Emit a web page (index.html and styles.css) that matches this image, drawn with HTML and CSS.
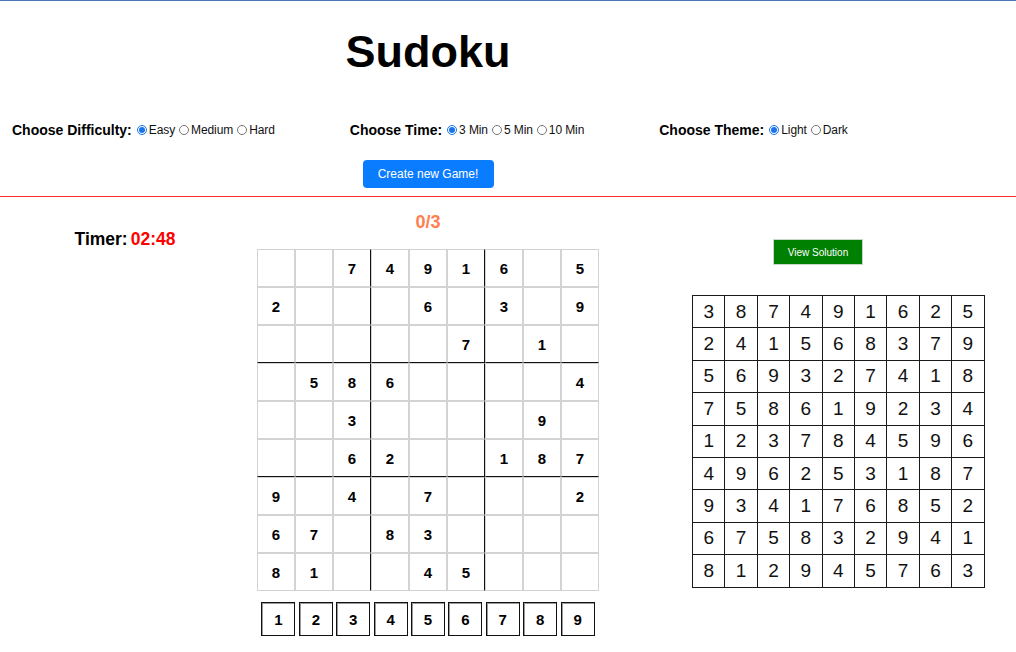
FILE: index.html
```html
<!DOCTYPE html>
<html lang="en">
<head>
<meta charset="utf-8">
<title>Sudoku</title>
<link rel="stylesheet" href="styles.css">
</head>
<body>
<div class="page">
  <header class="header">
    <div class="header-inner">
      <h1 class="title">Sudoku</h1>
    </div>
    <div class="controls">
      <div class="group">
        <span class="label">Choose Difficulty:</span>
        <label class="opt"><input type="radio" name="diff" checked>Easy</label>
        <label class="opt"><input type="radio" name="diff">Medium</label>
        <label class="opt"><input type="radio" name="diff">Hard</label>
      </div>
      <div class="group">
        <span class="label">Choose Time:</span>
        <label class="opt"><input type="radio" name="time" checked>3 Min</label>
        <label class="opt"><input type="radio" name="time">5 Min</label>
        <label class="opt"><input type="radio" name="time">10 Min</label>
      </div>
      <div class="group">
        <span class="label">Choose Theme:</span>
        <label class="opt"><input type="radio" name="theme" checked>Light</label>
        <label class="opt"><input type="radio" name="theme">Dark</label>
      </div>
    </div>
    <div class="header-inner actions">
      <button class="new-game" type="button">Create new Game!</button>
    </div>
  </header>

  <main class="main">
    <section class="left">
      <div class="timer"><span class="timer-label">Timer:</span><span class="timer-value">02:48</span></div>
    </section>

    <section class="center">
      <div class="score">0/3</div>
      <div class="board">
        <div class="cell"></div><div class="cell"></div><div class="cell br">7</div><div class="cell">4</div><div class="cell">9</div><div class="cell br">1</div><div class="cell">6</div><div class="cell"></div><div class="cell">5</div>
        <div class="cell">2</div><div class="cell"></div><div class="cell br"></div><div class="cell"></div><div class="cell">6</div><div class="cell br"></div><div class="cell">3</div><div class="cell"></div><div class="cell">9</div>
        <div class="cell bb"></div><div class="cell bb"></div><div class="cell bb br"></div><div class="cell bb"></div><div class="cell bb"></div><div class="cell bb br">7</div><div class="cell bb"></div><div class="cell bb">1</div><div class="cell bb"></div>
        <div class="cell"></div><div class="cell">5</div><div class="cell br">8</div><div class="cell">6</div><div class="cell"></div><div class="cell br"></div><div class="cell"></div><div class="cell"></div><div class="cell">4</div>
        <div class="cell"></div><div class="cell"></div><div class="cell br">3</div><div class="cell"></div><div class="cell"></div><div class="cell br"></div><div class="cell"></div><div class="cell">9</div><div class="cell"></div>
        <div class="cell bb"></div><div class="cell bb"></div><div class="cell bb br">6</div><div class="cell bb">2</div><div class="cell bb"></div><div class="cell bb br"></div><div class="cell bb">1</div><div class="cell bb">8</div><div class="cell bb">7</div>
        <div class="cell">9</div><div class="cell"></div><div class="cell br">4</div><div class="cell"></div><div class="cell">7</div><div class="cell br"></div><div class="cell"></div><div class="cell"></div><div class="cell">2</div>
        <div class="cell">6</div><div class="cell">7</div><div class="cell br"></div><div class="cell">8</div><div class="cell">3</div><div class="cell br"></div><div class="cell"></div><div class="cell"></div><div class="cell"></div>
        <div class="cell">8</div><div class="cell">1</div><div class="cell br"></div><div class="cell"></div><div class="cell">4</div><div class="cell br">5</div><div class="cell"></div><div class="cell"></div><div class="cell"></div>
      </div>
      <div class="pad">
        <button class="num" type="button">1</button>
        <button class="num" type="button">2</button>
        <button class="num" type="button">3</button>
        <button class="num" type="button">4</button>
        <button class="num" type="button">5</button>
        <button class="num" type="button">6</button>
        <button class="num" type="button">7</button>
        <button class="num" type="button">8</button>
        <button class="num" type="button">9</button>
      </div>
    </section>

    <section class="right">
      <button class="view" type="button">View Solution</button>
      <div class="solution">
        <div class="s">3</div><div class="s">8</div><div class="s">7</div><div class="s">4</div><div class="s">9</div><div class="s">1</div><div class="s">6</div><div class="s">2</div><div class="s">5</div>
        <div class="s">2</div><div class="s">4</div><div class="s">1</div><div class="s">5</div><div class="s">6</div><div class="s">8</div><div class="s">3</div><div class="s">7</div><div class="s">9</div>
        <div class="s">5</div><div class="s">6</div><div class="s">9</div><div class="s">3</div><div class="s">2</div><div class="s">7</div><div class="s">4</div><div class="s">1</div><div class="s">8</div>
        <div class="s">7</div><div class="s">5</div><div class="s">8</div><div class="s">6</div><div class="s">1</div><div class="s">9</div><div class="s">2</div><div class="s">3</div><div class="s">4</div>
        <div class="s">1</div><div class="s">2</div><div class="s">3</div><div class="s">7</div><div class="s">8</div><div class="s">4</div><div class="s">5</div><div class="s">9</div><div class="s">6</div>
        <div class="s">4</div><div class="s">9</div><div class="s">6</div><div class="s">2</div><div class="s">5</div><div class="s">3</div><div class="s">1</div><div class="s">8</div><div class="s">7</div>
        <div class="s">9</div><div class="s">3</div><div class="s">4</div><div class="s">1</div><div class="s">7</div><div class="s">6</div><div class="s">8</div><div class="s">5</div><div class="s">2</div>
        <div class="s">6</div><div class="s">7</div><div class="s">5</div><div class="s">8</div><div class="s">3</div><div class="s">2</div><div class="s">9</div><div class="s">4</div><div class="s">1</div>
        <div class="s">8</div><div class="s">1</div><div class="s">2</div><div class="s">9</div><div class="s">4</div><div class="s">5</div><div class="s">7</div><div class="s">6</div><div class="s">3</div>
      </div>
    </section>
  </main>
</div>
</body>
</html>
```

FILE: styles.css
```css
* { box-sizing: border-box; }

html, body {
  margin: 0;
  padding: 0;
  background: #fff;
}

body {
  font-family: "Liberation Sans", Arial, sans-serif;
  color: #000;
  border-top: 1px solid #4a76b4;
}

.page {
  width: 1016px;
}

/* Header */
.header {
  padding-bottom: 8px;
  border-bottom: 1px solid #ff2a2a;
}

.header-inner {
  width: 856px;
  text-align: center;
}

.title {
  margin: 24px 0 0;
  font-size: 45px;
  line-height: 54px;
  font-weight: bold;
}

.controls {
  display: flex;
  gap: 75px;
  margin-top: 41px;
  padding-left: 12px;
  height: 20px;
  line-height: 20px;
}

.group {
  display: flex;
  align-items: center;
  white-space: nowrap;
}

.label {
  font-size: 14px;
  font-weight: bold;
  margin-right: 1px;
}

.opt {
  display: flex;
  align-items: center;
  font-size: 12px;
  letter-spacing: -0.1px;
  color: #111;
}

.opt input {
  width: 10px;
  height: 10px;
  margin: 0 2px 0 4px;
  accent-color: #1a73e8;
}

.actions {
  margin-top: 20px;
}

.new-game {
  width: 131px;
  height: 28px;
  border: none;
  border-radius: 4px;
  background: #0a7cff;
  color: #fff;
  font-family: "Liberation Sans", Arial, sans-serif;
  font-size: 12px;
  padding: 0;
}

/* Main */
.main {
  display: flex;
  align-items: flex-start;
}

.left {
  width: 250px;
  display: flex;
  justify-content: center;
}

.timer {
  margin-top: 31px;
  line-height: 22px;
  font-size: 17.5px;
  font-weight: bold;
  display: flex;
  gap: 3px;
}

.timer-value {
  color: #ff0000;
}

.center {
  width: 356px;
  display: flex;
  flex-direction: column;
  align-items: center;
}

.score {
  margin-top: 14px;
  line-height: 22px;
  font-size: 18px;
  font-weight: bold;
  color: #ff7f50;
}

.board {
  margin-top: 16px;
  display: grid;
  grid-template-columns: repeat(9, 38px);
  grid-auto-rows: 38px;
}

.cell {
  border: 1px solid #d3d3d3;
  display: flex;
  align-items: center;
  justify-content: center;
  font-size: 15px;
  font-weight: bold;
  color: #000;
}

.cell.br { border-right-color: #111; }
.cell.bb { border-bottom-color: #111; }

.pad {
  margin-top: 11px;
  display: flex;
  gap: 3.4px;
}

.num {
  width: 34px;
  height: 34px;
  padding: 0;
  background: #fff;
  border: 1px solid #111;
  box-shadow: inset 1px 1px 0 #9a9a9a;
  font-family: "Liberation Sans", Arial, sans-serif;
  font-size: 15px;
  font-weight: bold;
  color: #000;
}

.right {
  flex: 1;
  display: flex;
  flex-direction: column;
  align-items: flex-start;
  padding-left: 86px;
}

.view {
  margin-top: 42px;
  margin-left: 81px;
  width: 90px;
  height: 26px;
  padding: 0;
  background: #008000;
  color: #fff;
  border: 1px solid #c8d8c8;
  font-family: "Liberation Sans", Arial, sans-serif;
  font-size: 10px;
}

.solution {
  margin-top: 30px;
  display: grid;
  grid-template-columns: repeat(9, 31.4px);
  grid-auto-rows: 31.4px;
  gap: 1px;
  padding: 1px;
  background: #1a1a1a;
}

.s {
  background: #fff;
  display: flex;
  align-items: center;
  justify-content: center;
  font-size: 19px;
  color: #111;
}
```
